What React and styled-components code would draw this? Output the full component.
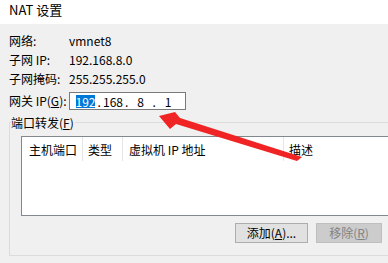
import React from "react";
import styled, { createGlobalStyle } from "styled-components";

const Global = createGlobalStyle`
  html, body { margin: 0; padding: 0; }
  body {
    width: 388px;
    height: 263px;
    overflow: hidden;
    background: #f0f0f0;
    font-family: "Noto Sans CJK SC", "Noto Sans", sans-serif;
    font-size: 12px;
    color: #000;
  }
`;

const Window = styled.div`
  position: relative;
  width: 388px;
  height: 263px;
  overflow: hidden;
  background: #f0f0f0;
`;

const TitleBar = styled.div`
  height: 24px;
  box-sizing: border-box;
  padding: 1px 0 0 9px;
  background: #ffffff;
  font-size: 13px;
  line-height: 17px;
`;

const Info = styled.div`
  display: grid;
  grid-template-columns: 60px auto;
  grid-auto-rows: 19px;
  align-items: center;
  padding: 7px 0 0 9px;
`;

const Label = styled.div`
  line-height: 14px;
  white-space: nowrap;
`;

const Value = styled.div`
  line-height: 14px;
  white-space: nowrap;
`;

const GatewayRow = styled.div`
  display: flex;
  align-items: center;
  height: 18px;
  margin-top: 4px;
  padding-left: 9px;
`;

const GatewayLabel = styled.div`
  width: 60px;
  line-height: 14px;
  white-space: nowrap;
`;

const IpBox = styled.div`
  display: flex;
  align-items: center;
  box-sizing: border-box;
  width: 117px;
  height: 18px;
  padding-left: 5px;
  background: #ffffff;
  border: 1px solid #7a7a7a;
`;

const IpField = styled.span`
  width: 21px;
  text-align: center;
  line-height: 13px;
`;

const IpDot = styled.span`
  width: 6.5px;
  text-align: center;
  line-height: 13px;
`;

const Selected = styled.span`
  background: #0078d7;
  color: #ffffff;
  display: inline-block;
  line-height: 13px;
`;

const GroupBox = styled.fieldset`
  margin: 6px 0 0 9px;
  padding: 0 0 12px 0;
  width: 400px;
  min-width: 0;
  box-sizing: border-box;
  border: 1px solid #dcdcdc;
`;

const Legend = styled.legend`
  margin-left: 1px;
  padding: 1px 1px 0 0;
  font-size: 12px;
  line-height: 12px;
`;

const ListView = styled.div`
  margin: 7px 0 0 11px;
  height: 80px;
  box-sizing: border-box;
  background: #ffffff;
  border: 1px solid #828790;
`;

const Header = styled.div`
  display: flex;
  height: 24px;
`;

const Column = styled.div`
  flex: 0 0 ${(p) => p.$w}px;
  box-sizing: border-box;
  display: flex;
  align-items: center;
  padding-left: ${(p) => p.$pad}px;
  border-right: ${(p) => (p.$last ? "none" : "1px solid #e5e5e5")};
  white-space: nowrap;
`;

const ButtonRow = styled.div`
  display: flex;
  gap: 8px;
  margin: 7px 0 0 225px;
`;

const Button = styled.button`
  width: ${(p) => p.$w}px;
  height: 20px;
  box-sizing: border-box;
  padding: 0;
  font-family: inherit;
  font-size: 12px;
  line-height: 16px;
  background: ${(p) => (p.disabled ? "#cccccc" : "#e1e1e1")};
  border: 1px solid ${(p) => (p.disabled ? "#bfbfbf" : "#adadad")};
  color: ${(p) => (p.disabled ? "#838383" : "#000000")};
  border-radius: 0;
`;

const ArrowLayer = styled.svg`
  position: absolute;
  left: 0;
  top: 0;
  pointer-events: none;
`;

export default function App() {
  return (
    <Window>
      <Global />
      <TitleBar>NAT 设置</TitleBar>
      <Info>
        <Label>网络:</Label>
        <Value>vmnet8</Value>
        <Label>子网 IP:</Label>
        <Value>192.168.8.0</Value>
        <Label>子网掩码:</Label>
        <Value>255.255.255.0</Value>
      </Info>
      <GatewayRow>
        <GatewayLabel>
          网关 IP(<u>G</u>):
        </GatewayLabel>
        <IpBox>
          <IpField>
            <Selected>192</Selected>
          </IpField>
          <IpDot>.</IpDot>
          <IpField>168</IpField>
          <IpDot>.</IpDot>
          <IpField>8</IpField>
          <IpDot>.</IpDot>
          <IpField>1</IpField>
        </IpBox>
      </GatewayRow>
      <GroupBox>
        <Legend>
          端口转发(<u>F</u>)
        </Legend>
        <ListView>
          <Header>
            <Column $w={61} $pad={7}>主机端口</Column>
            <Column $w={40} $pad={5}>类型</Column>
            <Column $w={161} $pad={6}>虚拟机 IP 地址</Column>
            <Column $w={120} $pad={5} $last>描述</Column>
          </Header>
        </ListView>
        <ButtonRow>
          <Button $w={73}>
            添加(<u>A</u>)...
          </Button>
          <Button $w={66} disabled>
            移除(<u>R</u>)
          </Button>
        </ButtonRow>
      </GroupBox>
      <ArrowLayer width="388" height="263" viewBox="0 0 388 263">
        <polygon
          points="159,116 175,112 180,118 302,157 297,161 176,124 170,129"
          fill="#f02424"
        />
      </ArrowLayer>
    </Window>
  );
}
